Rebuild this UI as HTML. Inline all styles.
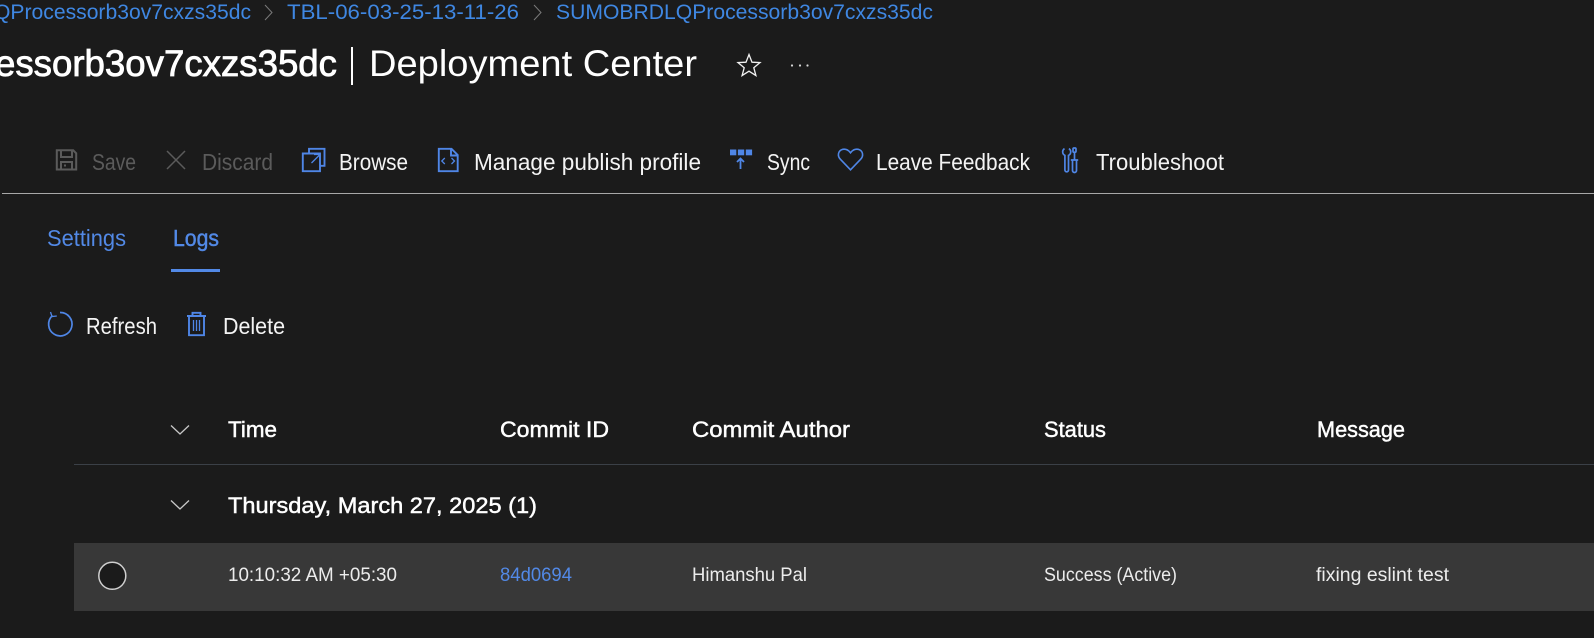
<!DOCTYPE html>
<html lang="en">
<head>
<meta charset="utf-8">
<title>Deployment Center</title>
<style>
html,body{margin:0;padding:0;background:#1b1b1b;width:1594px;height:638px;overflow:hidden}
svg{display:block}
text{font-family:"Liberation Sans",sans-serif;white-space:pre}
.bc{font-size:21px;fill:#3f87e2}
.tb{font-size:23px;fill:#f4f4f4}
.dis{font-size:23px;fill:#5b5b5b}
.tab{font-size:23px;fill:#5289e6}
.th{font-size:22px;fill:#fff;stroke:#fff;stroke-width:.45}
.td{font-size:19px;fill:#ececec}
.ic{fill:none;stroke:#4f86e6;stroke-width:1.9}
</style>
</head>
<body>
<svg width="1594" height="638" viewBox="0 0 1594 638" xmlns="http://www.w3.org/2000/svg">
<rect width="1594" height="638" fill="#1b1b1b"/>

<!-- Breadcrumb -->
<text class="bc" x="-6" y="19" textLength="257" lengthAdjust="spacingAndGlyphs">QProcessorb3ov7cxzs35dc</text>
<path d="M265 5l7 7.500-7 7.500" fill="none" stroke="#7a7a7a" stroke-width="1"/>
<text class="bc" x="287" y="19" textLength="232" lengthAdjust="spacingAndGlyphs">TBL-06-03-25-13-11-26</text>
<path d="M534 5l7 7.500-7 7.500" fill="none" stroke="#7a7a7a" stroke-width="1"/>
<text class="bc" x="556" y="19" textLength="377" lengthAdjust="spacingAndGlyphs">SUMOBRDLQProcessorb3ov7cxzs35dc</text>

<!-- Title -->
<text x="-5" y="76" font-size="37" fill="#fff" stroke="#fff" stroke-width=".8" textLength="342" lengthAdjust="spacingAndGlyphs">essorb3ov7cxzs35dc</text>
<rect x="351" y="47" width="2" height="38" fill="#fff"/>
<text x="369" y="76" font-size="37" fill="#fff" textLength="328" lengthAdjust="spacingAndGlyphs">Deployment Center</text>
<path d="M749 54.500l3 7.700 8 .4-6.200 5.100 2.100 7.900-6.900-4.400-6.900 4.400 2.100-7.900-6.200-5.100 8-.4z" fill="none" stroke="#f2f2f2" stroke-width="1.300"/>
<circle cx="792" cy="65.500" r="1.100" fill="#d8d8d8"/><circle cx="800" cy="65.500" r="1.100" fill="#d8d8d8"/><circle cx="807.500" cy="65.500" r="1.100" fill="#d8d8d8"/>

<!-- Toolbar -->
<g fill="none" stroke="#5b5b5b" stroke-width="2">
<path d="M56.800 150.300h16.400l3 3v16.200h-19.400z"/>
<path d="M61 150.300v6.700h11v-6.700"/>
<path d="M61 169.500v-7.500h11v7.500"/>
<path d="M64 165.500h2"/>
<path d="M167 151l18 18M185 151l-18 18" stroke-width="1.500"/>
</g>
<text class="dis" x="92" y="170" textLength="44" lengthAdjust="spacingAndGlyphs">Save</text>
<text class="dis" x="202" y="170" textLength="71" lengthAdjust="spacingAndGlyphs">Discard</text>

<g class="ic">
<path d="M309 153v-4.200h15.500v17h-4.500"/>
<path d="M302.800 153.500h17.200v17.700h-17.200z"/>
<path d="M311.500 163l8.500-8.500M314 154.500h6v6" stroke-width="1.300"/>
</g>
<text class="tb" x="339" y="170" textLength="69" lengthAdjust="spacingAndGlyphs">Browse</text>

<g class="ic">
<path d="M438.800 148.800h12.700l6.200 6.200v16.200h-18.900z"/>
<path d="M451 148.800v6.700h6.700"/>
<path d="M444.800 158l-3 3 3 3M451.500 158l3 3-3 3" stroke-width="1.300"/>
</g>
<text class="tb" x="474" y="170" textLength="227" lengthAdjust="spacingAndGlyphs">Manage publish profile</text>

<g fill="#4f86e6">
<rect x="730" y="149.500" width="6.300" height="5.800"/>
<rect x="737.900" y="149.500" width="6.300" height="5.800"/>
<rect x="745.800" y="149.500" width="6.300" height="5.800"/>
</g>
<path d="M740.500 169v-10.500M737 162l3.500-3.500 3.500 3.500" fill="none" stroke="#4f86e6" stroke-width="1.800"/>
<text class="tb" x="767" y="170" textLength="43" lengthAdjust="spacingAndGlyphs">Sync</text>

<path class="ic" style="stroke-width:1.600" d="M850.500 169.800l-10.200-10.600c-3.200-3.400-2-7.900 1.100-9.400 3.200-1.500 6.700-.3 9.100 3 2.400-3.300 5.900-4.500 9.100-3 3.100 1.500 4.300 6 1.100 9.400z"/>
<text class="tb" x="876" y="170" textLength="154" lengthAdjust="spacingAndGlyphs">Leave Feedback</text>

<g class="ic" style="stroke-width:1.700">
<path d="M1064.500 148.600a3.900 3.900 0 0 0 .4 6.800v14.600a1.800 1.800 0 0 0 3.600 0v-14.600a3.900 3.900 0 0 0 .4-6.800"/>
<rect x="1073" y="148" width="3" height="4.200" rx="1"/>
<path d="M1074.500 152.200v7.800M1070.800 160h7.400"/>
<path d="M1072.500 160v10.500a2 2 0 0 0 4 0v-10.500"/>
</g>
<text class="tb" x="1096" y="170" textLength="128" lengthAdjust="spacingAndGlyphs">Troubleshoot</text>

<rect x="2" y="193" width="1592" height="1" fill="#a8a8a8"/>

<!-- Tabs -->
<text class="tab" x="47" y="246" textLength="79" lengthAdjust="spacingAndGlyphs">Settings</text>
<text class="tab" x="173" y="246" textLength="46" lengthAdjust="spacingAndGlyphs" stroke="#5289e6" stroke-width=".45">Logs</text>
<rect x="171" y="269" width="49" height="3" fill="#5289e6"/>

<!-- Commands -->
<g class="ic">
<path d="M52.500 315.500a11.700 11.700 0 1 0 7.500-3" stroke-width="1.700"/>
<path d="M50.500 312l1.500 4.500 4.800-.5" stroke-width="1.300"/>
</g>
<text class="tb" x="86" y="334" textLength="71" lengthAdjust="spacingAndGlyphs">Refresh</text>
<g class="ic">
<path d="M187 316h19"/>
<path d="M192.500 316v-3.200h8v3.200"/>
<path d="M189 316v19.200h15v-19.200"/>
<path d="M193.500 320v11M196.500 320v11M199.500 320v11" stroke-width="1.300"/>
</g>
<text class="tb" x="223" y="334" textLength="62" lengthAdjust="spacingAndGlyphs">Delete</text>

<!-- Table header -->
<path d="M171 425.500l9 8.500 9-8.500" fill="none" stroke="#c8c8c8" stroke-width="1.300"/>
<text class="th" x="228" y="437" textLength="49" lengthAdjust="spacingAndGlyphs">Time</text>
<text class="th" x="500" y="437" textLength="109" lengthAdjust="spacingAndGlyphs">Commit ID</text>
<text class="th" x="692" y="437" textLength="158" lengthAdjust="spacingAndGlyphs">Commit Author</text>
<text class="th" x="1044" y="437" textLength="62" lengthAdjust="spacingAndGlyphs">Status</text>
<text class="th" x="1317" y="437" textLength="88" lengthAdjust="spacingAndGlyphs">Message</text>
<rect x="74" y="464" width="1520" height="1" fill="#3b4047"/>

<!-- Group -->
<path d="M171 500.500l9 8.500 9-8.500" fill="none" stroke="#c8c8c8" stroke-width="1.300"/>
<text class="th" x="228" y="513" textLength="309" lengthAdjust="spacingAndGlyphs">Thursday, March 27, 2025 (1)</text>

<!-- Row -->
<rect x="74" y="543" width="1520" height="68" fill="#383838"/>
<circle cx="112.300" cy="575.800" r="13.500" fill="#1b1b1b" stroke="#cfcfcf" stroke-width="1.500"/>
<text class="td" x="228" y="581" textLength="169" lengthAdjust="spacingAndGlyphs">10:10:32 AM +05:30</text>
<text class="td" x="500" y="581" textLength="72" lengthAdjust="spacingAndGlyphs" style="fill:#5289e6">84d0694</text>
<text class="td" x="692" y="581" textLength="115" lengthAdjust="spacingAndGlyphs">Himanshu Pal</text>
<text class="td" x="1044" y="581" textLength="133" lengthAdjust="spacingAndGlyphs">Success (Active)</text>
<text class="td" x="1316" y="581" textLength="133" lengthAdjust="spacingAndGlyphs">fixing eslint test</text>
</svg>
</body>
</html>
